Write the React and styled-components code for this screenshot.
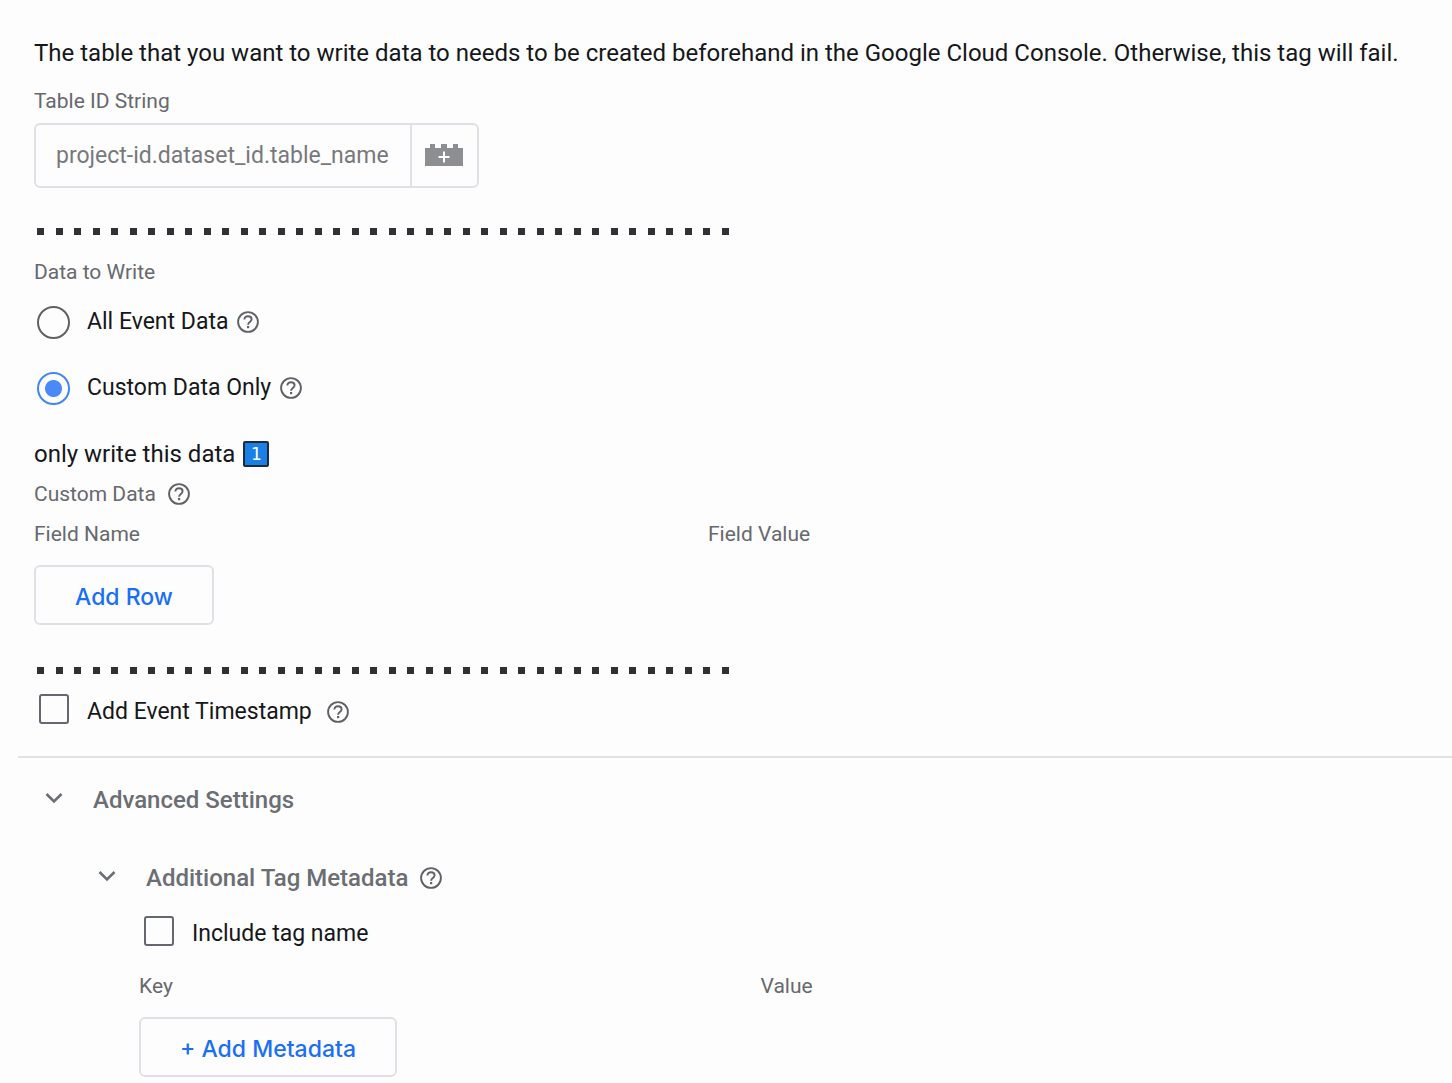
import { useState } from 'react';
import styled, { createGlobalStyle } from 'styled-components';

const DOTS = Array.from({ length: 38 }, (_, index) => index);

const HelpIcon = () => (
    <svg width="22" height="22" viewBox="0 0 22 22" fill="none" aria-hidden="true">
        <circle cx="11" cy="11" r="9.9" stroke="currentColor" strokeWidth="1.9" />
        <path d="M7.400 8.500C7.400 6.400 9 5.200 11 5.200c2.100 0 3.600 1.300 3.600 3.100 0 2.600-3.500 2.900-3.500 5.500" stroke="currentColor" strokeWidth="1.900" />
        <rect x="10" y="15" width="2.200" height="2.200" fill="currentColor" />
    </svg>
);

const BrickIcon = () => (
    <svg width="38" height="22" viewBox="0 0 38 22" aria-hidden="true">
        <path d="M0 4h5V0h5v4h6V0h6v4h6V0h5v4h5v18H0z" fill="#8c8e91" />
        <path d="M19 7.500v11M13.500 13h11" stroke="#fff" strokeWidth="2" />
    </svg>
);

const ChevronIcon = () => (
    <svg width="18" height="16" viewBox="0 0 18 16" fill="none" aria-hidden="true">
        <path d="M1.500 2l7.500 7.500L16.500 2" stroke="currentColor" strokeWidth="2.6" />
    </svg>
);

const Help = ({ topic }) => (
    <HelpButton type="button" aria-label={`Help: ${topic}`}>
        <HelpIcon />
    </HelpButton>
);

const Separator = () => (
    <DotLine role="separator">
        {DOTS.map((dot) => <Dot key={dot} />)}
    </DotLine>
);

const Columns = ({ names }) => (
    <Table>
        <thead>
            <tr>
                {names.map((name) => <th key={name} scope="col">{name}</th>)}
            </tr>
        </thead>
    </Table>
);

export default function App() {
    const [dataToWrite, setDataToWrite] = useState('custom');
    const [timestamp, setTimestamp] = useState(false);
    const [includeName, setIncludeName] = useState(false);
    const [advancedOpen, setAdvancedOpen] = useState(true);
    const [metadataOpen, setMetadataOpen] = useState(true);

    return (
        <>
            <GlobalStyle />
            <Form>
                <Intro>
                    The table that you want to write data to needs to be created beforehand in the Google Cloud Console. Otherwise, this tag will fail.
                </Intro>

                <Section>
                    <FieldLabel as="label" htmlFor="table-id">Table ID String</FieldLabel>
                    <InputGroup>
                        <TableInput id="table-id" placeholder="project-id.dataset_id.table_name" />
                        <VariableButton type="button" aria-label="Insert variable">
                            <BrickIcon />
                        </VariableButton>
                    </InputGroup>

                    <Separator />

                    <Fieldset>
                        <FieldLabel as="legend">Data to Write</FieldLabel>
                        <RadioRow>
                            <Radio
                                id="all-data"
                                name="data-to-write"
                                checked={dataToWrite === 'all'}
                                onChange={() => setDataToWrite('all')}
                            />
                            <label htmlFor="all-data">All Event Data</label>
                            <Help topic="All Event Data" />
                        </RadioRow>
                        <RadioRow>
                            <Radio
                                id="custom-data"
                                name="data-to-write"
                                checked={dataToWrite === 'custom'}
                                onChange={() => setDataToWrite('custom')}
                            />
                            <label htmlFor="custom-data">Custom Data Only</label>
                            <Help topic="Custom Data Only" />
                        </RadioRow>
                    </Fieldset>

                    <Note>
                        only write this data <Badge>1</Badge>
                    </Note>
                    <CustomLabel>
                        Custom Data <Help topic="Custom Data" />
                    </CustomLabel>
                    <Columns names={['Field Name', 'Field Value']} />
                    <Button type="button">Add Row</Button>

                    <Separator />

                    <CheckRow>
                        <Checkbox
                            id="timestamp"
                            checked={timestamp}
                            onChange={() => setTimestamp(!timestamp)}
                        />
                        <label htmlFor="timestamp">Add Event Timestamp</label>
                        <Help topic="Add Event Timestamp" />
                    </CheckRow>
                </Section>

                <Advanced>
                    <Toggle type="button" aria-expanded={advancedOpen} onClick={() => setAdvancedOpen(!advancedOpen)}>
                        <ChevronIcon />
                        Advanced Settings
                    </Toggle>
                    {advancedOpen && (
                        <Nested>
                            <ToggleRow>
                                <Toggle type="button" aria-expanded={metadataOpen} onClick={() => setMetadataOpen(!metadataOpen)}>
                                    <ChevronIcon />
                                    Additional Tag Metadata
                                </Toggle>
                                <Help topic="Additional Tag Metadata" />
                            </ToggleRow>
                            {metadataOpen && (
                                <Metadata>
                                    <CheckRow>
                                        <Checkbox
                                            id="tag-name"
                                            checked={includeName}
                                            onChange={() => setIncludeName(!includeName)}
                                        />
                                        <label htmlFor="tag-name">Include tag name</label>
                                    </CheckRow>
                                    <Columns names={['Key', 'Value']} />
                                    <Button type="button">+ Add Metadata</Button>
                                </Metadata>
                            )}
                        </Nested>
                    )}
                </Advanced>
            </Form>
        </>
    );
};

const GlobalStyle = createGlobalStyle`
    * {
        box-sizing: border-box;
    }

    body {
        margin: 0;
        background: #fdfdfd;
        color: #15171a;
        font-family: Roboto, "Liberation Sans", sans-serif;
        font-size: 24px;
        line-height: 32px;
    }
`;

const Form = styled.form`
    padding: 37px 0 7px 18px;
`;

const Intro = styled.p`
    margin: 0;
    padding: 0 16px;
`;

const Section = styled.section`
    margin-top: 20px;
    padding: 0 70px 0 16px;
`;

const FieldLabel = styled.div`
    display: block;
    padding: 0;
    color: #67696d;
    font-size: 21px;
    line-height: 24px;
`;

const InputGroup = styled.div`
    display: flex;
    width: 445px;
    height: 65px;
    margin-top: 10px;
    border: 2px solid #dfe1e6;
    border-radius: 6px;
`;

const TableInput = styled.input`
    flex: 1;
    min-width: 0;
    padding: 0 20px;
    border: none;
    background: transparent;
    font: inherit;
    font-size: 23px;
    outline: none;

    &::placeholder {
        color: #77797c;
    }
`;

const VariableButton = styled.button`
    display: flex;
    align-items: center;
    justify-content: center;
    width: 67px;
    padding: 0 2px 2px 0;
    border: none;
    border-left: 2px solid #dfe1e6;
    background: transparent;
`;

const DotLine = styled.div`
    display: flex;
    justify-content: space-between;
    width: 692px;
    margin: 40px 0 0 3px;
`;

const Dot = styled.span`
    width: 7px;
    height: 7px;
    background: #303135;
`;

const Fieldset = styled.fieldset`
    margin: 25px 0 0;
    padding: 0;
    border: none;
`;

const Row = styled.div`
    display: flex;
    align-items: center;
`;

const RadioRow = styled(Row)`
    height: 66px;
    gap: 9px;
    font-size: 23px;

    &:first-of-type {
        margin-top: 5px;
    }

    label {
        margin-left: 8px;
    }
`;

const Radio = styled.input.attrs({ type: 'radio' })`
    appearance: none;
    width: 33px;
    height: 33px;
    margin: 0 0 0 3px;
    border: 2px solid #5f6165;
    border-radius: 50%;

    &:checked {
        border-color: #4285f4;
        background: radial-gradient(circle, #4a8af8 8px, transparent 9px);
    }
`;

const Checkbox = styled.input.attrs({ type: 'checkbox' })`
    appearance: none;
    width: 30px;
    height: 30px;
    margin: 0 3px 5px 5px;
    border: 2px solid #64676d;
    border-radius: 3px;

    &:checked {
        background: #4285f4;
    }
`;

const HelpButton = styled.button`
    display: flex;
    padding: 0;
    border: none;
    background: transparent;
    color: #5f6165;
`;

const Note = styled(Row)`
    gap: 8px;
    margin-top: 17px;
`;

const Badge = styled.span`
    width: 26px;
    height: 26px;
    border: 2px solid #1d2b3c;
    border-radius: 2px;
    background: #1a80e6;
    color: #fff;
    font-family: "DejaVu Sans", sans-serif;
    font-size: 17px;
    line-height: 22px;
    text-align: center;
`;

const CustomLabel = styled(FieldLabel)`
    display: flex;
    align-items: center;
    gap: 12px;
    margin-top: 12px;
`;

const Table = styled.table`
    width: 100%;
    margin-top: 16px;
    border-collapse: collapse;
    table-layout: fixed;

    th {
        padding: 0;
        color: #67696d;
        font-size: 21px;
        font-weight: 400;
        line-height: 24px;
        text-align: left;
    }
`;

const Button = styled.button`
    display: block;
    height: 60px;
    margin-top: 19px;
    padding: 3px 39px 0;
    border: 2px solid #dfe1e6;
    border-radius: 6px;
    background: transparent;
    color: #1a6ff5;
    font-family: Inter, sans-serif;
    font-size: 23px;
    font-weight: 500;

    & + ${DotLine} {
        margin-top: 42px;
    }
`;

const CheckRow = styled(Row)`
    gap: 15px;
    margin-top: 20px;
    font-size: 23px;
`;

const Advanced = styled.section`
    margin-top: 27px;
    padding: 26px 70px 0 16px;
    border-top: 2px solid #e0e2e6;
`;

const Toggle = styled.button`
    display: flex;
    align-items: center;
    gap: 30px;
    padding: 0 0 0 11px;
    border: none;
    background: transparent;
    color: #6b6e72;
    font: inherit;
    font-weight: 500;
`;

const Nested = styled.div`
    margin-top: 46px;
    padding-left: 53px;
`;

const ToggleRow = styled(Row)`
    gap: 12px;
`;

const Metadata = styled.div`
    padding-left: 52px;

    ${CheckRow} {
        margin-top: 22px;
    }

    ${Table} {
        margin-top: 23px;
    }
`;
